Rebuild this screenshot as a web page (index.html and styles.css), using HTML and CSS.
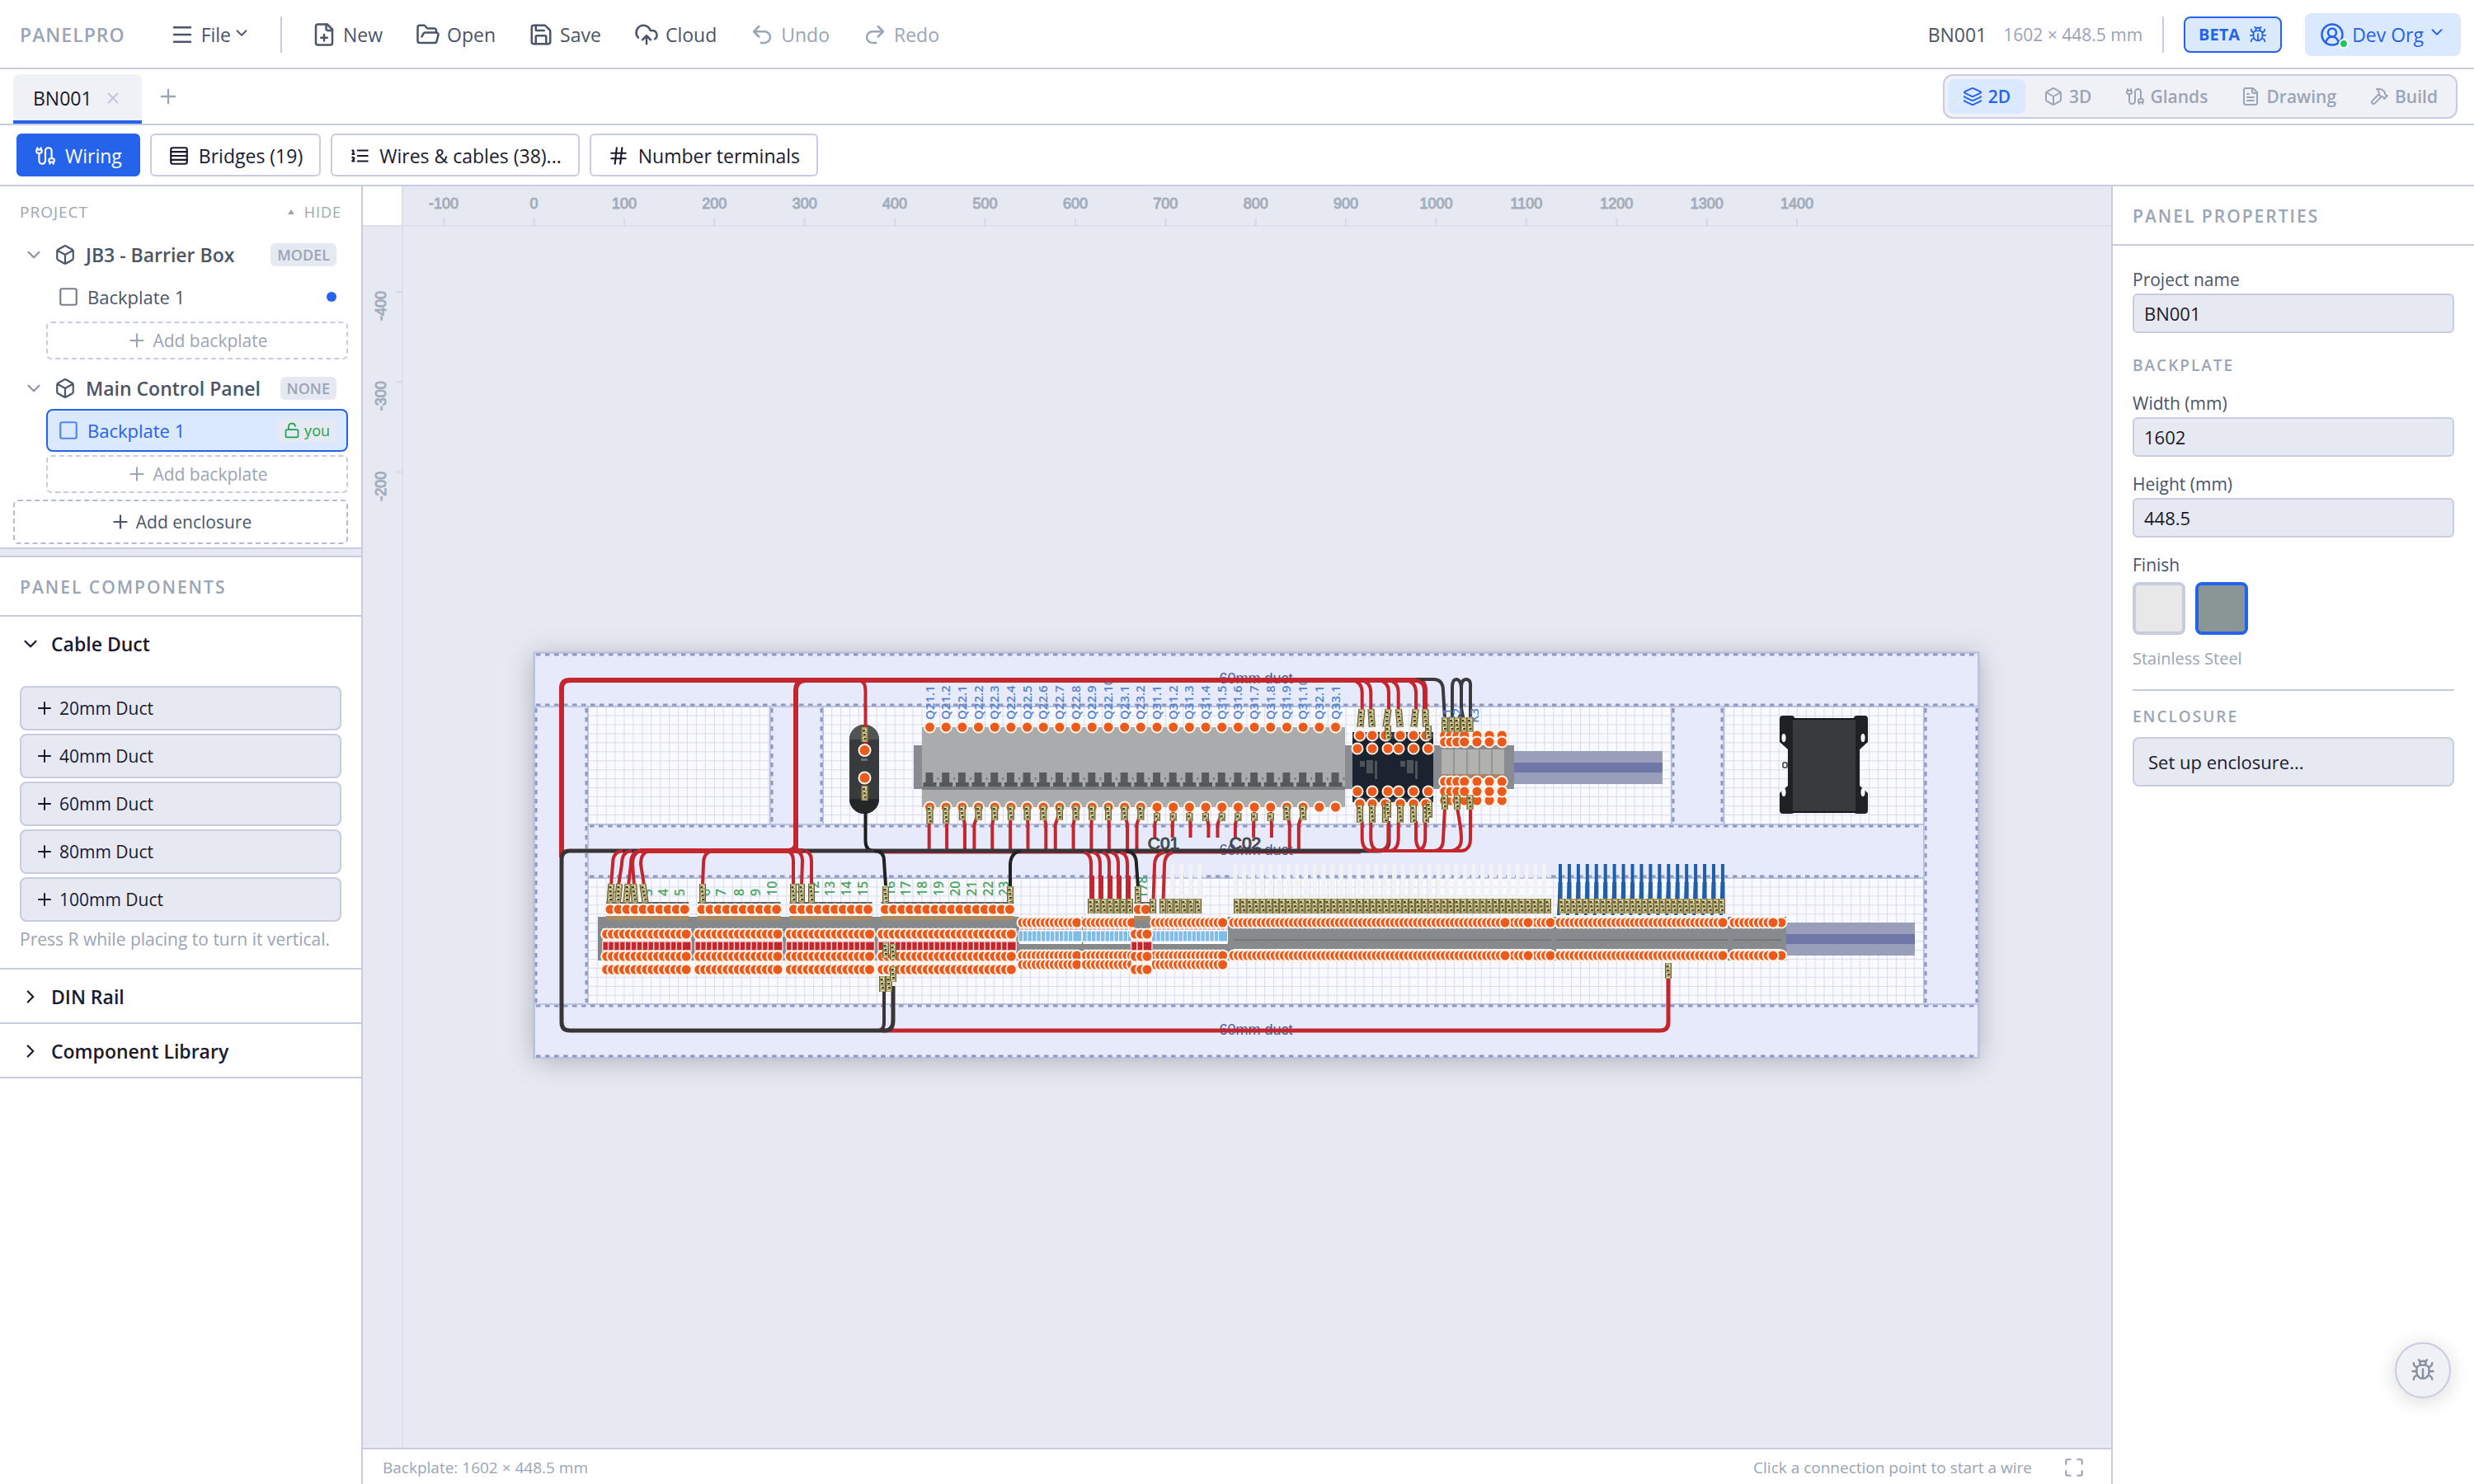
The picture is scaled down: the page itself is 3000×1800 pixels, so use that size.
FILE: index.html
```html
<!DOCTYPE html>
<html lang="en">
<head>
<meta charset="utf-8">
<title>PanelPro - BN001</title>
<link rel="stylesheet" href="styles.css">
</head>
<body>
<svg class="sprite" aria-hidden="true">
  <symbol id="menu" viewBox="0 0 24 24"><path d="M4 5h16M4 12h16M4 19h16"/></symbol>
  <symbol id="down" viewBox="0 0 24 24"><path d="m6 9 6 6 6-6"/></symbol>
  <symbol id="right" viewBox="0 0 24 24"><path d="m9 18 6-6-6-6"/></symbol>
  <symbol id="plus" viewBox="0 0 24 24"><path d="M5 12h14M12 5v14"/></symbol>
  <symbol id="close" viewBox="0 0 24 24"><path d="M18 6 6 18M6 6l12 12"/></symbol>
  <symbol id="file-plus" viewBox="0 0 24 24"><path d="M15 2H6a2 2 0 0 0-2 2v16a2 2 0 0 0 2 2h12a2 2 0 0 0 2-2V7Z"/><path d="M14 2v4a2 2 0 0 0 2 2h4M9 15h6M12 18v-6"/></symbol>
  <symbol id="folder" viewBox="0 0 24 24"><path d="m6 14 1.5-2.9A2 2 0 0 1 9.24 10H20a2 2 0 0 1 1.94 2.5l-1.54 6a2 2 0 0 1-1.95 1.5H4a2 2 0 0 1-2-2V5a2 2 0 0 1 2-2h3.9a2 2 0 0 1 1.69.9l.81 1.2a2 2 0 0 0 1.67.9H18a2 2 0 0 1 2 2v2"/></symbol>
  <symbol id="save" viewBox="0 0 24 24"><path d="M15.2 3a2 2 0 0 1 1.4.6l3.8 3.8a2 2 0 0 1 .6 1.4V19a2 2 0 0 1-2 2H5a2 2 0 0 1-2-2V5a2 2 0 0 1 2-2z"/><path d="M17 21v-7a1 1 0 0 0-1-1H8a1 1 0 0 0-1 1v7M7 3v4a1 1 0 0 0 1 1h7"/></symbol>
  <symbol id="cloud" viewBox="0 0 24 24"><path d="M12 13v8M4 14.899A7 7 0 1 1 15.71 8h1.79a4.5 4.5 0 0 1 2.5 8.242M8 17l4-4 4 4"/></symbol>
  <symbol id="undo" viewBox="0 0 24 24"><path d="M9 14 4 9l5-5M4 9h10.5a5.5 5.5 0 0 1 0 11H11"/></symbol>
  <symbol id="redo" viewBox="0 0 24 24"><path d="m15 14 5-5-5-5M20 9H9.500a5.500 5.500 0 0 0 0 11H13"/></symbol>
  <symbol id="bug" viewBox="0 0 24 24"><path d="m8 2 1.880 1.880M14.120 3.880 16 2M9 7.130v-1a3.003 3.003 0 1 1 6 0v1M12 20c-3.300 0-6-2.700-6-6v-3a4 4 0 0 1 4-4h4a4 4 0 0 1 4 4v3c0 3.300-2.700 6-6 6M12 20v-9M6.530 9C4.600 8.800 3 7.100 3 5M6 13H2M3 21c0-2.100 1.700-3.900 3.800-4M20.970 5c0 2.100-1.600 3.800-3.500 4M22 13h-4M17.200 17c2.100.1 3.800 1.900 3.800 4"/></symbol>
  <symbol id="user" viewBox="0 0 24 24"><path d="M18 20a6 6 0 0 0-12 0"/><circle cx="12" cy="10" r="4"/><circle cx="12" cy="12" r="10"/></symbol>
  <symbol id="layers" viewBox="0 0 24 24"><path d="M12.830 2.180a2 2 0 0 0-1.660 0L2.600 6.080a1 1 0 0 0 0 1.830l8.580 3.910a2 2 0 0 0 1.660 0l8.580-3.900a1 1 0 0 0 0-1.830Z"/><path d="M2 12a1 1 0 0 0 .58.91l8.600 3.910a2 2 0 0 0 1.650 0l8.580-3.900A1 1 0 0 0 22 12M2 17a1 1 0 0 0 .58.91l8.600 3.910a2 2 0 0 0 1.650 0l8.580-3.900A1 1 0 0 0 22 17"/></symbol>
  <symbol id="box" viewBox="0 0 24 24"><path d="M21 8a2 2 0 0 0-1-1.730l-7-4a2 2 0 0 0-2 0l-7 4A2 2 0 0 0 3 8v8a2 2 0 0 0 1 1.730l7 4a2 2 0 0 0 2 0l7-4A2 2 0 0 0 21 16ZM3.300 7l8.700 5 8.700-5M12 22V12"/></symbol>
  <symbol id="cable" viewBox="0 0 24 24"><path d="M17 21v-2a1 1 0 0 1-1-1v-1a2 2 0 0 1 2-2h2a2 2 0 0 1 2 2v1a1 1 0 0 1-1 1M19 15V6.500a1 1 0 0 0-7 0v11a1 1 0 0 1-7 0V9M21 21v-2h-4M3 5h4V3M7 5a1 1 0 0 1 1 1v1a2 2 0 0 1-2 2H4a2 2 0 0 1-2-2V6a1 1 0 0 1 1-1V3"/></symbol>
  <symbol id="file-text" viewBox="0 0 24 24"><path d="M15 2H6a2 2 0 0 0-2 2v16a2 2 0 0 0 2 2h12a2 2 0 0 0 2-2V7Z"/><path d="M14 2v4a2 2 0 0 0 2 2h4M10 9H8M16 13H8M16 17H8"/></symbol>
  <symbol id="hammer" viewBox="0 0 24 24"><path d="m15 12-8.373 8.373a1 1 0 1 1-3-3L12 9M18 15l4-4M21.500 11.500l-1.914-1.914A2 2 0 0 1 19 8.172V7l-2.260-2.260a6 6 0 0 0-4.202-1.756L9 2.960l.92.82A6.180 6.180 0 0 1 12 8.400V10l2 2h1.172a2 2 0 0 1 1.414.586L18.500 14.500"/></symbol>
  <symbol id="rows" viewBox="0 0 24 24"><rect x="3" y="3" width="18" height="18" rx="2"/><path d="M21 7.500H3M21 12H3M21 16.500H3"/></symbol>
  <symbol id="list" viewBox="0 0 24 24"><path d="M10 12h11M10 18h11M10 6h11M4 10h2M4 6h1v4M6 18H4c0-1 2-2 2-3s-1-1.500-2-1"/></symbol>
  <symbol id="hash" viewBox="0 0 24 24"><path d="M4 9h16M4 15h16M10 3 8 21M16 3l-2 18"/></symbol>
  <symbol id="square" viewBox="0 0 24 24"><rect x="3" y="3" width="18" height="18" rx="2"/></symbol>
  <symbol id="unlock" viewBox="0 0 24 24"><rect x="3" y="11" width="18" height="11" rx="2"/><path d="M7 11V7a5 5 0 0 1 9.900-1"/></symbol>
  <symbol id="expand" viewBox="0 0 24 24"><path d="M8 3H5a2 2 0 0 0-2 2v3M21 8V5a2 2 0 0 0-2-2h-3M3 16v3a2 2 0 0 0 2 2h3M16 21h3a2 2 0 0 0 2-2v-3"/></symbol>
</svg>

<header class="topbar">
  <span class="brand">PANELPRO</span>
  <button class="tool"><svg class="icon i30"><use href="#menu"/></svg>File<svg class="icon i22"><use href="#down"/></svg></button>
  <span class="rule"></span>
  <button class="tool"><svg class="icon i30"><use href="#file-plus"/></svg>New</button>
  <button class="tool"><svg class="icon i30"><use href="#folder"/></svg>Open</button>
  <button class="tool"><svg class="icon i30"><use href="#save"/></svg>Save</button>
  <button class="tool"><svg class="icon i30"><use href="#cloud"/></svg>Cloud</button>
  <button class="tool muted"><svg class="icon i30"><use href="#undo"/></svg>Undo</button>
  <button class="tool muted"><svg class="icon i30"><use href="#redo"/></svg>Redo</button>
  <span class="file-name">BN001</span>
  <span class="file-size">1602 × 448.5 mm</span>
  <span class="rule short"></span>
  <button class="beta">BETA<svg class="icon i22"><use href="#bug"/></svg></button>
  <button class="org"><span class="avatar"><svg class="icon i30"><use href="#user"/></svg><span class="online"></span></span>Dev Org<svg class="icon i22"><use href="#down"/></svg></button>
</header>

<div class="tabbar">
  <div class="tab"><span>BN001</span><button class="bare" aria-label="Close tab"><svg class="icon i22"><use href="#close"/></svg></button></div>
  <button class="bare add-tab" aria-label="New tab"><svg class="icon i28"><use href="#plus"/></svg></button>
  <nav class="views">
    <button class="view on"><svg class="icon i24"><use href="#layers"/></svg>2D</button>
    <button class="view"><svg class="icon i24"><use href="#box"/></svg>3D</button>
    <button class="view"><svg class="icon i24"><use href="#cable"/></svg>Glands</button>
    <button class="view"><svg class="icon i24"><use href="#file-text"/></svg>Drawing</button>
    <button class="view"><svg class="icon i24"><use href="#hammer"/></svg>Build</button>
  </nav>
</div>

<div class="actions">
  <button class="action primary"><svg class="icon i26"><use href="#cable"/></svg>Wiring</button>
  <button class="action"><svg class="icon i26"><use href="#rows"/></svg>Bridges (19)</button>
  <button class="action"><svg class="icon i26"><use href="#list"/></svg>Wires &amp; cables (38)...</button>
  <button class="action"><svg class="icon i26"><use href="#hash"/></svg>Number terminals</button>
</div>

<main class="work">
  <aside class="left">
    <section class="project">
      <div class="project-head"><span>PROJECT</span><button class="bare hide"><span class="tri"></span>HIDE</button></div>
      <div class="enclosure"><svg class="icon i26 soft"><use href="#down"/></svg><svg class="icon i26"><use href="#box"/></svg><span class="grow">JB3 - Barrier Box</span><span class="badge">MODEL</span></div>
      <button class="plate"><svg class="icon i26"><use href="#square"/></svg><span class="grow">Backplate 1</span><span class="dot"></span></button>
      <button class="dashed inset"><svg class="icon i26"><use href="#plus"/></svg>Add backplate</button>
      <div class="enclosure"><svg class="icon i26 soft"><use href="#down"/></svg><svg class="icon i26"><use href="#box"/></svg><span class="grow">Main Control Panel</span><span class="badge">NONE</span></div>
      <button class="plate on"><svg class="icon i26"><use href="#square"/></svg><span class="grow">Backplate 1</span><span class="badge you"><svg class="icon i20"><use href="#unlock"/></svg>you</span></button>
      <button class="dashed inset last"><svg class="icon i26"><use href="#plus"/></svg>Add backplate</button>
      <button class="dashed strong"><svg class="icon i26"><use href="#plus"/></svg>Add enclosure</button>
    </section>
    <div class="splitter"></div>
    <h2 class="title comps">PANEL COMPONENTS</h2>
    <section class="group">
      <button class="group-head"><svg class="icon i26"><use href="#down"/></svg>Cable Duct</button>
      <div class="group-body">
        <button class="duct"><svg class="icon i24"><use href="#plus"/></svg>20mm Duct</button>
        <button class="duct"><svg class="icon i24"><use href="#plus"/></svg>40mm Duct</button>
        <button class="duct"><svg class="icon i24"><use href="#plus"/></svg>60mm Duct</button>
        <button class="duct"><svg class="icon i24"><use href="#plus"/></svg>80mm Duct</button>
        <button class="duct"><svg class="icon i24"><use href="#plus"/></svg>100mm Duct</button>
        <p class="hint">Press R while placing to turn it vertical.</p>
      </div>
    </section>
    <section class="group"><button class="group-head"><svg class="icon i26"><use href="#right"/></svg>DIN Rail</button></section>
    <section class="group"><button class="group-head"><svg class="icon i26"><use href="#right"/></svg>Component Library</button></section>
  </aside>

  <section class="center">
    <div class="stage"><svg id="drawing" viewBox="440 226 2120 1530" preserveAspectRatio="xMinYMin slice" role="img" aria-label="Backplate layout"></svg></div>
    <footer class="status"><span>Backplate: 1602 × 448.5 mm</span><span class="tip">Click a connection point to start a wire</span><button class="bare" aria-label="Fit to screen"><svg class="icon i26"><use href="#expand"/></svg></button></footer>
  </section>

  <aside class="props">
    <h2 class="title">PANEL PROPERTIES</h2>
    <form class="form">
      <label for="pname">Project name</label>
      <input class="field" id="pname" type="text" value="BN001">
      <h3 class="sub">BACKPLATE</h3>
      <label for="pw">Width (mm)</label>
      <input class="field" id="pw" type="text" value="1602">
      <label class="next" for="ph">Height (mm)</label>
      <input class="field" id="ph" type="text" value="448.5">
      <fieldset class="finish">
        <legend>Finish</legend>
        <input class="swatch paint" type="radio" name="finish" aria-label="Painted">
        <input class="swatch steel" type="radio" name="finish" aria-label="Stainless Steel" checked>
      </fieldset>
      <p class="finish-name">Stainless Steel</p>
      <h3 class="sub ruled">ENCLOSURE</h3>
      <button class="setup" type="button">Set up enclosure...</button>
    </form>
  </aside>
</main>
<button class="report" aria-label="Report a bug"><svg class="icon i30"><use href="#bug"/></svg></button>
<script src="drawing.js"></script>
</body>
</html>
```
FILE: styles.css
```css
* { box-sizing: border-box; }
body { margin: 0; height: 100vh; display: flex; flex-direction: column; overflow: hidden; background: #fff; color: #4a5568; font: 23px/30px "Open Sans", "Noto Sans", sans-serif; }
button, input { font: inherit; color: inherit; margin: 0; }
button { background: none; border: 0; padding: 0; cursor: pointer; }
h2, h3, p { margin: 0; font-weight: 400; }
.sprite { position: absolute; width: 0; height: 0; }
.icon { flex: none; fill: none; stroke: currentColor; stroke-width: 2; stroke-linecap: round; stroke-linejoin: round; display: block; }
.i20 { width: 20px; height: 20px; } .i22 { width: 22px; height: 22px; } .i24 { width: 24px; height: 24px; }
.i26 { width: 26px; height: 26px; } .i28 { width: 28px; height: 28px; } .i30 { width: 30px; height: 30px; }
.bare { display: flex; align-items: center; color: #9aa5b5; }
.grow { flex: 1; text-align: left; white-space: nowrap; }

.topbar { display: flex; align-items: center; height: 84px; flex: none; padding: 2px 16px 0 24px; border-bottom: 2px solid #c8cce0; }
.brand { color: #9aa5b5; font-weight: 600; letter-spacing: 1px; margin-right: 34px; }
.tool { display: flex; align-items: center; gap: 8px; padding: 10px 20px; }
.tool .i22 { margin: -4px 0 0 -6px; }
.tool.muted { color: #9aa5b5; }
.rule { width: 2px; height: 44px; background: #c8cce0; margin: 0 16px; }
.rule.short { margin: 0 24px; }
.file-name { margin-left: auto; }
.file-size { margin-left: 20px; color: #9aa5b5; font-size: 21px; }
.beta { display: flex; align-items: center; gap: 11px; height: 44px; padding: 0 16px; border: 2px solid #2563eb; border-radius: 8px; background: #dbe9fe; color: #2563eb; font-size: 20px; font-weight: 700; }
.org { display: flex; align-items: center; gap: 9px; height: 52px; margin-left: 28px; padding: 0 18px; border-radius: 8px; background: #dbe9fe; color: #2563eb; }
.org > .i22 { margin: -6px 0 0 -4px; }
.avatar { position: relative; }
.online { position: absolute; right: -5px; bottom: -2px; width: 12px; height: 12px; border-radius: 50%; background: #22c55e; border: 2px solid #fff; }

.tabbar { display: flex; align-items: flex-end; height: 68px; flex: none; padding: 0 20px 0 16px; border-bottom: 2px solid #c8cce0; }
.tab { display: flex; align-items: center; gap: 14px; height: 60px; padding: 2px 24px 0; background: #f0f1f7; border-bottom: 4px solid #2563eb; border-radius: 8px 8px 0 0; color: #1a1a2e; }
.tab .bare { color: #c0c7d4; }
.add-tab { margin-left: 18px; height: 66px; }
.views { display: flex; gap: 4px; margin: 0 0 6px auto; height: 54px; padding: 4px; border: 2px solid #c8cce0; border-radius: 12px; background: #f0f1f7; }
.view { display: flex; align-items: center; gap: 7px; padding: 0 18px; border-radius: 8px; color: #9aa5b5; font-size: 21px; font-weight: 600; }
.view.on { background: #dbe9fe; color: #2563eb; }

.actions { display: flex; gap: 12px; align-items: center; height: 74px; flex: none; padding: 0 20px; border-bottom: 2px solid #c8cce0; }
.action { display: flex; align-items: center; gap: 11px; height: 52px; padding: 1px 20px 0; border: 2px solid #c8cce0; border-radius: 6px; color: #1a1a2e; }
.action.primary { background: #2563eb; border-color: #2563eb; color: #fff; }

.work { flex: 1; display: flex; min-height: 0; }
.left { width: 440px; flex: none; border-right: 2px solid #c8cce0; }
.project { display: flex; flex-direction: column; padding: 8px 16px 4px; }
.project-head { display: flex; justify-content: space-between; height: 46px; margin-bottom: 4px; align-items: center; padding: 0 8px; color: #9aa5b5; font-size: 19px; letter-spacing: 1px; }
.hide { font-size: 18px; gap: 12px; letter-spacing: 1px; }
.tri { border: 4px solid transparent; border-top: 0; border-bottom: 6px solid #9aa5b5; }
.enclosure { display: flex; align-items: center; height: 50px; gap: 12px; padding: 0 14px 0 12px; font-weight: 600; }
.enclosure .soft { color: #8a94a4; }
.badge { background: #e6e9f2; color: #9aa5b5; border-radius: 6px; font-size: 18px; font-weight: 600; line-height: 28px; padding: 0 8px; }
.plate { display: flex; align-items: center; gap: 10px; height: 52px; margin-left: 40px; padding: 0 12px; border: 2px solid transparent; border-radius: 8px; font-size: 22px; }
.plate .i26 { opacity: .75; }
.plate.on { background: #dbe9fe; border-color: #2563eb; color: #2563eb; }
.dot { width: 12px; height: 12px; border-radius: 50%; background: #2563eb; }
.you { display: flex; align-items: center; gap: 5px; color: #16a34a; font-weight: 400; }
.dashed { display: flex; align-items: center; justify-content: center; gap: 6px; border: 2px dashed #c8cce0; border-radius: 6px; font-size: 21px; color: #9aa5b5; }
.dashed.inset { margin: 4px 0 10px 40px; height: 46px; }
.dashed.inset.last { margin-bottom: 8px; }
.dashed.strong { height: 54px; border-color: #b4bad0; color: #4a5568; font-weight: 500; }
.splitter { height: 12px; background: #e6e9f2; border: 2px solid #c8cce0; border-width: 2px 0; }
.title { color: #9aa5b5; font-size: 21px; font-weight: 600; letter-spacing: 2px; height: 72px; line-height: 72px; padding: 0 24px; border-bottom: 2px solid #c8cce0; white-space: nowrap; }
.group { border-bottom: 2px solid #c8cce0; }
.group-head { display: flex; align-items: center; gap: 12px; width: 100%; height: 64px; padding: 2px 24px 0; color: #1a1a2e; font-weight: 600; }
.group-body { display: flex; flex-direction: column; gap: 4px; padding: 20px 24px 18px; }
.duct { display: flex; align-items: center; gap: 6px; height: 54px; padding: 0 16px; border: 2px solid #c8cce0; border-radius: 8px; background: #e6e9f2; color: #1a1a2e; font-size: 21px; }
.hint { color: #9aa5b5; font-size: 21px; line-height: 34px; white-space: nowrap; }

.center { flex: 1; min-width: 0; display: flex; flex-direction: column; }
.stage { flex: 1; min-height: 0; background: #e6e9f2; }
.stage svg { display: block; width: 100%; height: 100%; }
.status { display: flex; align-items: center; height: 44px; flex: none; padding: 2px 32px 0 24px; border-top: 2px solid #c8cce0; color: #9aa5b5; font-size: 19px; }
.tip { margin: 0 38px 0 auto; }

.props { width: 440px; flex: none; border-left: 2px solid #c8cce0; }
.form { display: flex; flex-direction: column; padding: 24px; font-size: 21px; }
.form label, .finish legend { line-height: 30px; margin: 2px 0; padding: 0; }
.form label.next { margin-top: 18px; }
.field { height: 48px; padding: 0 12px; border: 2px solid #c8cce0; border-radius: 6px; background: #e6e9f2; color: #1a1a2e; font-size: 22px; }
.sub { color: #9aa5b5; font-size: 19px; font-weight: 600; letter-spacing: 2px; line-height: 30px; margin: 24px 0 14px; }
.finish { display: flex; gap: 12px; border: 0; padding: 0; margin: 18px 0 0; }
.finish legend { margin-bottom: 6px; }
.swatch { appearance: none; width: 64px; height: 64px; border: 4px solid #c8cce0; border-radius: 8px; }
.paint { background: #e8e8e8; } .steel { background: #8a9696; }
.swatch:checked { border-color: #2563eb; }
.finish-name { color: #9aa5b5; font-size: 20px; margin: 14px 0 0; }
.sub.ruled { border-top: 2px solid #c8cce0; padding-top: 16px; margin: 22px 0 10px; }
.setup { height: 60px; padding: 0 17px; text-align: left; border: 2px solid #c8cce0; border-radius: 8px; background: #e6e9f2; color: #1a1a2e; font-size: 22px; }
.report { position: fixed; right: 28px; bottom: 104px; width: 68px; height: 68px; display: grid; place-items: center; border: 2px solid #c8cce0; border-radius: 50%; background: #f0f1f7; color: #8590a0; box-shadow: 0 4px 24px rgba(0,0,0,.15); }

.ruler-text { font: 18px "Liberation Sans", sans-serif; fill: #a3adbb; stroke: #a3adbb; stroke-width: 1px; }
.duct-text { font: 18px "Liberation Sans", sans-serif; fill: #4a5598; }
.cable-text { font: 21px "Liberation Sans", sans-serif; fill: #44484c; stroke: #44484c; stroke-width: 1px; }
.relay-text { font: 600 15px "Open Sans", sans-serif; fill: #5583cf; }
.terminal-text { font: 600 16px "Open Sans", sans-serif; fill: #4aa564; }
```
FILE: drawing.js
```js
const out = [];
const add = s => out.push(s);
const RED = '#c4262e', BLACK = '#3b3a3c', ORANGE = '#ea5a1c', BLUE = '#1f5fa8';
const rect = (x, y, w, h, fill, extra = '') => add(`<rect x="${x}" y="${y}" width="${w}" height="${h}" fill="${fill}" ${extra}/>`);
const line = (x1, y1, x2, y2, c, w, extra = '') => add(`<path d="M${x1} ${y1}L${x2} ${y2}" stroke="${c}" stroke-width="${w}" fill="none" ${extra}/>`);
const wire = (d, c = RED, w = 4) => add(`<path d="${d}" stroke="${c}" stroke-width="${w}" fill="none"/>`);
const dot = (x, y, r = 6.5) => add(`<circle cx="${x}" cy="${y}" r="${r}" fill="${ORANGE}" stroke="#fff3ea" stroke-width="2"/>`);
const text = (x, y, s, cls, anchor = 'middle', turn = false) =>
  add(`<text class="${cls}" text-anchor="${anchor}" ${turn ? `transform="translate(${x} ${y}) rotate(-90)"` : `x="${x}" y="${y}"`}>${s}</text>`);
const range = (n, f) => { for (let i = 0; i < n; i++) f(i); };
const dots = (x1, x2, n, ys) => ys.forEach(y => range(n, i => dot(x1 + (x2 - x1) * i / (n - 1), y)));

// Marker sleeve pushed over a wire end
const sleeve = (x, y, h, lean = 0) => {
  add(`<g transform="rotate(${lean} ${x} ${y + h / 2})">`);
  rect(x - 4, y, 8, h, '#b0a56f');
  line(x - 3.5, y, x - 3.5, y + h, '#6b6338', 1);
  line(x + 3.5, y, x + 3.5, y + h, '#6b6338', 1);
  line(x, y + 2, x, y + h - 1, '#f2ebbd', 4, 'stroke-dasharray="3 2"');
  line(x - 1, y + 3, x + 1, y + h - 1, '#3d3820', 3, 'stroke-dasharray="2 3"');
  add('</g>');
};

add(`<defs>
<pattern id="grid" x="647" y="791" width="10.94" height="10.94" patternUnits="userSpaceOnUse"><rect width="11" height="11" fill="#f9faff"/><path d="M0 .5H11M.5 0V11" stroke="#d9dcec" stroke-width="1"/></pattern>
<filter id="shade" x="-5%" y="-15%" width="110%" height="130%"><feDropShadow dx="0" dy="4" stdDeviation="16" flood-color="#000" flood-opacity=".25"/></filter>
</defs>`);

// Rulers
rect(440, 226, 48, 47, '#fff');
line(440, 274, 2560, 274, '#dcdfeb', 2);
line(488, 226, 488, 1758, '#dcdfeb', 2);
for (let n = -1; n <= 14; n++) {
  const x = 647.5 + n * 109.4;
  line(x, 264, x, 274, '#d5d9e6', 2);
  text(x, 253, n * 100, 'ruler-text');
}
[-400, -300, -200].forEach(v => {
  const y = 791.5 + v * 1.094;
  line(480, y, 488, y, '#d5d9e6', 2);
  text(468, y - 1, v, 'ruler-text', 'end', true);
});

// Backplate and ducts
rect(647.5, 791.5, 1752, 491, '#f9faff', 'filter="url(#shade)"');
rect(647.5, 791.5, 1752, 491, 'url(#grid)', 'stroke="#b5bcda" stroke-width="2"');
const duct = (x, y, w, h) => {
  rect(x, y, w, h, '#e7eafa', 'stroke="#bcc3df" stroke-width="2"');
  const dash = 'stroke-dasharray="5.500 5.500"';
  if (w > h) { line(x + 2, y + 2, x + w - 2, y + 2, '#8d97c4', 3, dash); line(x + 2, y + h - 2, x + w - 2, y + h - 2, '#8d97c4', 3, dash); }
  else { line(x + 2, y + 2, x + 2, y + h - 2, '#8d97c4', 3, dash); line(x + w - 2, y + 2, x + w - 2, y + h - 2, '#8d97c4', 3, dash); }
};
duct(648, 792, 1751, 65);
duct(648, 1218, 1751, 65);
duct(648, 857, 65, 361);
duct(2333, 857, 66, 361);
duct(713, 1000, 1620, 65);
duct(934, 857, 64, 143);
duct(2027, 857, 63, 143);
[829, 1037, 1255].forEach(y => text(1523, y, '60mm duct', 'duct-text'));

// DIN rails and end clamps
const rail = (x, w, y) => { rect(x, y, w, 40, '#999eba'); rect(x, y + 14, w, 12, '#6f77a8'); };
rail(1820, 196, 911);
rail(2160, 162, 1119);
[[1108, 10], [1630, 10], [1738, 10], [1824, 12]].forEach(([x, w]) => rect(x, 904, w, 53, '#888c90'));

// Relay row
rect(1118, 882, 513, 97, '#a9abac');
rect(1118, 954, 513, 4, '#7b7d7f');
const relays = ['Q21.1', 'Q21.2', 'Q22.1', 'Q22.2', 'Q22.3', 'Q22.4', 'Q22.5', 'Q22.6', 'Q22.7', 'Q22.8', 'Q22.9', 'Q22.10', 'Q23.1', 'Q23.2', 'Q31.1', 'Q31.2', 'Q31.3', 'Q31.4', 'Q31.5', 'Q31.6', 'Q31.7', 'Q31.8', 'Q31.9', 'Q31.10', 'Q32.1', 'Q33.1'];
relays.forEach((name, i) => {
  const x = 1127.5 + i * 19.68;
  rect(x - 5, 937, 9, 14, '#585b5e');
  rect(x - 8, 949, 16, 5, '#55585b');
  rect(x + 9, 943, 2, 3, '#77797b');
  dot(x, 882); dot(x, 979);
  text(x + 5, 873, name, 'relay-text', 'start', true);
});

// Breaker
rect(1030, 879, 36, 108, '#373b3e', 'rx="18"');
add('<path d="M1030 897a18 18 0 0 1 36 0z" fill="#505456"/><path d="M1030 969a18 18 0 0 0 36 0z" fill="#242628"/>');
rect(1044, 920, 8, 3, '#6b6f72');

// Contactor block
rect(1640, 896, 98, 72, '#1c2431');
rect(1640, 888, 98, 85, '#1c2431', 'opacity=".9"');
[1649, 1698].forEach(x => { rect(x, 923, 6, 7, '#4d5356'); rect(x + 8, 922, 8, 16, '#4d5356'); rect(x + 18, 923, 3, 22, '#4d5356'); });
rect(1748, 907, 76, 36, '#b1b2b0');
rect(1748, 904, 76, 5, '#85898c');
rect(1748, 939, 76, 5, '#ab855e');
[1763, 1779, 1794, 1809].forEach(x => line(x, 909, x, 939, '#949698', 2));

// Power supply
add('<path d="M2158 872q0-4 4-4h10q4 0 4 3h72q0-3 4-3h9q4 0 4 4v28l-10 9v44l10 9v21q0 4-4 4h-9q-4 0-4-3h-72q0 3-4 3h-10q-4 0-4-4v-21l10-9v-44l-10-9z" fill="#1f2224"/>');
rect(2174, 871, 76, 115, '#373b3d');
rect(2174, 871, 76, 2, '#15181a');
rect(2174, 984, 76, 2, '#15181a');
[[2163, 895], [2259, 895], [2163, 961], [2259, 961]].forEach(([x, y]) => add(`<ellipse cx="${x}" cy="${y}" rx="2.500" ry="5" fill="#fff"/>`));
rect(2162, 925, 5, 6, 'none', 'stroke="#33373a" stroke-width="1.500" rx="1"');

// Lower terminal strip
rect(725, 1112, 511, 53, '#85898c');
const groups = [[735.7, 832.100, 15, 740, 830.200, 10], [847.800, 943, 15, 851, 941.600, 10], [958.400, 1054.500, 15, 962.500, 1052.500, 10], [1069.800, 1226.300, 24, 1073.500, 1224.400, 16], [1376.600, 1391, 3, 1380.400, 1389.400, 2]];
const lowerStrip = () => groups.forEach(([a, b, n, c, d, m]) => {
  rect(c - 5, 1094, d - c + 10, 2, '#5d6163');
  rect(c - 5, 1096, d - c + 10, 16, '#f4f4f4');
  rect(c - 5, 1111, d - c + 10, 15, '#85898c');
  rect(c - 5, 1111, d - c + 10, 5, '#ab8a62');
  rect(a - 5, 1126, b - a + 11, 57, '#fff5f0');
  range(n, i => rect(a + (b - a) * i / (n - 1) - 5, 1142, 11, 11, RED, 'stroke="#f6cfcf" stroke-width="1.500"'));
  dots(a, b, n, [1133, 1160, 1176]);
  dots(c, d, m, [1103]);
});
rect(1236, 1112, 258, 53, '#85898c');
[[1240, 1305.800, 13], [1317.500, 1372.500, 11], [1396, 1482.600, 17]].forEach(([a, b, n]) => {
  rect(a - 4, 1112, b - a + 10, 33, '#fff');
  rect(a - 4, 1153, b - a + 10, 24, '#fff7f2');
  line(a - 3, 1127, b + 5, 1127, '#dd8a8a', 1.5, 'stroke-dasharray="4 1.500"');
  range(n, i => rect(a + (b - a) * i / (n - 1) - 5, 1129, i === n - 1 ? 11 : 6, 13, '#7fbce9', 'stroke="#fff" stroke-width="1"'));
  dots(a, b, n, [1119, 1159, 1170]);
});
rect(1494, 1126, 670, 25, '#878b8f');
line(1494, 1140, 2164, 1140, '#74787b', 2);
[1490, 1881, 2095, 2160].forEach(x => rect(x, 1112, 6, 53, '#878b8f'));
[[1496, 1825, 60], [1830, 1853, 5], [1858, 1880, 5], [1892, 2089, 36], [2103, 2150, 9], [2155, 2160, 2]].forEach(([a, b, n]) => dots(a, b, n, [1119, 1159]));
[1825, 1853, 2089, 2150].forEach(x => { dot(x, 1119); dot(x, 1159); });

// Terminal numbers
[747, 766, 786, 804.5, 824.5, 856, 875, 897, 916.5, 936.500, 968, 988, 1007, 1027, 1047, 1080, 1099, 1119, 1139, 1159, 1179, 1199, 1218].forEach((x, i) => text(x + 5, 1087, i + 1, 'terminal-text', 'start', true));
text(1391, 1090, '178', 'terminal-text', 'start', true);

// Spare cores
const whites = [];
range(4, i => whites.push(1421.700 + i * 10.940));
range(36, i => whites.push(1498 + i * 10.700));
whites.forEach(x => line(x, 1048, x, 1092, '#f1f2f4', 5));
range(19, i => { const x = 1892 + i * 10.940; wire(`M${x} 1048V1070L${x - 2} 1110`, BLUE, 4); line(x, 1070, x, 1092, BLUE, 5); });

// Wires
range(24, i => {
  const xs = [122, 178, 235, 265, 322, 379, 435, 492, 522, 579, 636, 692, 750, 780, 837, 893, 950, 1007, 1036, 1092, 1150, 1207, 1264, 1293];
  const x = 1080 + xs[i] * .3827;
  const short = i > 13 && i < 22;
  wire(`M${1127.500 + i * 19.680} 985L${x} 1000V${short ? 1016 : 1032}`, RED, 4);
});
wire('M1049.500 985V1020Q1049.500 1032 1060 1032', '#1e1e20', 4);
line(1070, 1034, 1650, 1034, RED, 3);
wire('M2023 1186V1240Q2023 1250 2013 1250H1070', RED, 5);
wire('M681 1040V835Q681 825 691 825H1718Q1728 825 1728 838V862', RED, 6);
wire('M1083 1196V1238Q1083 1250 1073 1250H691Q681 1250 681 1240V1042Q681 1032 691 1032H1672Q1684 1032 1684 1020V1000', '#3a3436', 5);
wire('M1072 1196V1240Q1072 1250 1064 1250', '#3a3436', 4);
wire('M965 1030V838Q965 825 977 825', RED, 6);
wire('M1040 825Q1049.500 825 1049.500 838V905', RED, 4);
[[743, 741], [754, 750], [765, 762], [767, 769], [777, 781], [853, 852]].forEach(([x, b]) => wire(`M${x + 12} 1032Q${x} 1033 ${x} 1048L${b} 1074`, RED, 4));
[[962, 962], [973, 972], [984, 984]].forEach(([x, b]) => wire(`M${x - 8} 1032Q${x} 1034 ${x} 1044L${b} 1074`, RED, 4));
line(776, 1032, 974, 1032, RED, 6);
wire('M955 1031Q965 1031 965 1020', RED, 4);
wire('M1060 1032Q1072 1032 1072 1044L1074 1074', '#222', 4);
wire('M1238 1032Q1225 1034 1225 1050V1076', '#222', 4);
wire('M1366 1032Q1378 1034 1378 1048L1380 1076', '#222', 4);
[1323, 1334, 1345, 1356, 1367].forEach(x => { wire(`M${x - 8} 1034Q${x} 1036 ${x} 1048V1108`, RED, 4); line(x + 2, 1062, x + 2, 1090, RED, 4); });
wire('M1412 1034Q1400 1036 1400 1050L1398 1108', RED, 4);
wire('M1422 1034Q1412 1036 1412 1050L1410 1108', RED, 4);
wire('M1717 824H1738Q1750 824 1750 838L1752 872M1761 872V834Q1761 824 1766 824T1772 834V866L1767 874M1775 874L1772 860V834Q1772 824 1778 824T1783 834V872', BLACK, 4);
const tops = [1651.700, 1662.300, 1684, 1695.700, 1717, 1728.300];
const upper = [1649, 1664, 1680, 1698, 1714, 1729];
const inner = [1646, 1664, 1683, 1696, 1714, 1732];
tops.forEach((x, i) => {
  wire(`M${x - 12} 825Q${x} 827 ${x} 840V862`, RED, 4);
  wire(`M${x} 996V1016Q${x} 1032 ${x + (i % 3 < 2 && i !== 3 ? 12 : -12)} 1032`, RED, 4);
});
wire('M1664 1032H1770Q1783 1032 1783 1018V980M1738 1032Q1750 1032 1750 1018L1752 980M1760 1032Q1772 1030 1772 1018T1767 980', RED, 4);

// Connection points and sleeves
lowerStrip();
upper.forEach(x => { dot(x, 892); dot(x, 975); });
inner.forEach(x => { dot(x, 908); dot(x, 960); });
const feed = [1751.700, 1759, 1766.700, 1775.700, 1791, 1806, 1821.300];
[892, 900, 948, 971, 960].forEach(y => feed.forEach(x => dot(x, y)));
dot(1048.500, 910, 7); dot(1048.500, 943.500, 7);
sleeve(1048.500, 882, 18); sleeve(1048.500, 953, 18);
tops.forEach((x, i) => { sleeve((x + upper[i]) / 2, 860, 22, (x - upper[i]) * 2); sleeve(upper[i], 976, 22); });
sleeve(1683, 880, 17); sleeve(1732, 880, 17); sleeve(1683, 972, 20); sleeve(1733, 972, 20);
[['K1', 1760], ['K2', 1772], ['K3', 1793]].forEach(([s, x]) => text(x, 877, s, 'relay-text', 'start', true));
[1752, 1760.500, 1767, 1775, 1782.500].forEach(x => sleeve(x, 870, 18));
[1752, 1767, 1782.500].forEach(x => sleeve(x, 964, 18));
range(24, i => { const short = i > 13 && i < 22; sleeve(1127.500 + i * 19.680, short ? 986 : 977, short ? 10 : i < 2 ? 22 : 18); });
[[740.500, 4], [750, 6], [760.500, 6], [769, -4], [781, -8], [852, 0], [962, 0], [972, 0], [984, 0]].forEach(([x, a]) => sleeve(x, 1072, 23, a));
[1074, 1225, 1380].forEach(x => sleeve(x, 1075, 20));
const strip = (a, b, n) => range(n, i => sleeve(a + (b - a) * i / (n - 1), 1090, 18));
strip(1323, 1370, 7); sleeve(1398, 1090, 18); strip(1410, 1453, 6); strip(1500, 1877, 49); strip(1894, 2088, 28);
[[1070, 1184], [1078, 1184], [1083, 1172], [1074, 1143], [1083, 1145]].forEach(([x, y]) => sleeve(x, y, 19));
sleeve(2023, 1168, 19);
text(1411, 1030, 'C01', 'cable-text');
text(1510, 1030, 'C02', 'cable-text');
document.getElementById('drawing').innerHTML = out.join('');
```
